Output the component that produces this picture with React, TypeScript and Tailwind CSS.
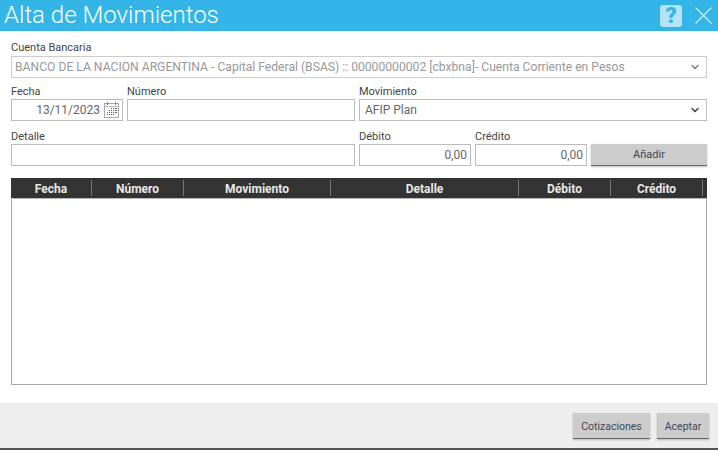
import React from "react";
import { ChevronDown } from "lucide-react";

const columns = [
    { label: "Fecha", width: "w-[81px]" },
    { label: "Número", width: "w-[92px]" },
    { label: "Movimiento", width: "w-[147px]" },
    { label: "Detalle", width: "w-[188px]" },
    { label: "Débito", width: "w-[92px]" },
    { label: "Crédito", width: "w-[92px]" },
];

const Label = ({ children }: { children: React.ReactNode }) => (
    <div className="h-[13px] text-[11px] leading-[13px] text-[#444]">{children}</div>
);

const Field = ({ value }: { value?: string }) => (
    <div className="mt-[1px] h-[22px] border border-[#bbb] bg-white px-[3px] text-right text-[12px] leading-[21px] text-[#666]">
        {value}
    </div>
);

const CalendarIcon = () => (
    <svg width="15" height="16" viewBox="0 0 15 16" className="shrink-0" fill="none">
        <rect x="0.5" y="1.5" width="14" height="14" stroke="#aaa" />
        <path d="M3.5 0v3M11.5 0v3" stroke="#777" />
        <path d="M1 4.5h13" stroke="#bbb" />
        <path d="M7 6.5h1M9 6.5h1M11 6.5h2M5 8.5h1M7 8.5h1M9 8.5h1M11 8.5h2M3 10.5h1M5 10.5h1M7 10.5h1M9 10.5h1M11 10.5h2M3 12.5h1M5 12.5h1M7 12.5h1M9 12.5h1" stroke="#666" />
    </svg>
);

const Button = ({ children, className }: { children: React.ReactNode; className: string }) => (
    <div className={`flex items-center justify-center border-b border-b-[#666] bg-[#ccc] pt-[2px] text-[#445] shadow-[0_1px_2px_rgba(0,0,0,0.25)] ${className}`}>
        {children}
    </div>
);

const App = () => {
    return (
        <div className="flex h-[450px] w-[718px] flex-col overflow-hidden bg-white font-['Roboto',sans-serif]">
            <div className="flex h-[31px] shrink-0 items-center justify-between bg-[#33b5e7] pl-[4px] pr-[6px]">
                <div className="text-[24px] font-light leading-[31px] text-white">Alta de Movimientos</div>
                <div className="flex items-center gap-[13px]">
                    <div className="flex h-[22px] w-[22px] items-center justify-center rounded-[3px] bg-[#b5e3f7] text-[22px] font-black leading-none text-[#33b5e7]">?</div>
                    <svg width="17" height="17" viewBox="0 0 17 17" fill="none">
                        <path d="M0.5 0.5L16.5 16.5M16.5 0.5L0.5 16.5" stroke="#c8ecfa" strokeWidth="1.3" />
                    </svg>
                </div>
            </div>

            <div className="flex flex-1 flex-col px-[11px] pt-[10px]">
                <Label>Cuenta Bancaria</Label>
                <div className="mt-[2px] flex h-[22px] items-center justify-between border border-[#ccc] bg-white pl-[3px] pr-[5px] text-[12.15px] text-[#999]">
                    <span className="whitespace-nowrap">BANCO DE LA NACION ARGENTINA - Capital Federal (BSAS) :: 00000000002 [cbxbna]- Cuenta Corriente en Pesos</span>
                    <ChevronDown size={12} strokeWidth={2.5} className="text-[#777]" />
                </div>

                <div className="mt-[7px] flex gap-[4px]">
                    <div className="w-[112px]">
                        <Label>Fecha</Label>
                        <div className="mt-[1px] flex h-[22px] items-center justify-end gap-[4px] border border-[#bbb] pr-[3px] text-[12px] text-[#666]">
                            <span>13/11/2023</span>
                            <CalendarIcon />
                        </div>
                    </div>
                    <div className="w-[228px]">
                        <Label>Número</Label>
                        <Field />
                    </div>
                    <div className="w-[348px]">
                        <Label>Movimiento</Label>
                        <div className="mt-[1px] flex h-[22px] items-center justify-between border border-[#bbb] pl-[5px] pr-[5px] text-[12px] text-[#666]">
                            <span>AFIP Plan</span>
                            <ChevronDown size={12} strokeWidth={3} className="text-[#444]" />
                        </div>
                    </div>
                </div>

                <div className="mt-[9px] flex gap-[4px]">
                    <div className="w-[344px]">
                        <Label>Detalle</Label>
                        <Field />
                    </div>
                    <div className="w-[112px]">
                        <Label>Débito</Label>
                        <Field value="0,00" />
                    </div>
                    <div className="w-[112px]">
                        <Label>Crédito</Label>
                        <Field value="0,00" />
                    </div>
                    <Button className="mt-[14px] h-[22px] w-[116px] text-[11px]">Añadir</Button>
                </div>

                <div className="mt-[12px] flex h-[207px] flex-col border border-t-0 border-[#aaa]">
                    <div className="-mx-px flex h-[21px] shrink-0 border-b border-b-[#bbb] bg-[#333]">
                        {columns.map((col) => (
                            <div
                                key={col.label}
                                className={`${col.width} my-[2px] flex items-center justify-center border-r border-r-[#777] pt-[1px] text-[12px] font-bold text-[#e8e8e8]`}
                            >
                                {col.label}
                            </div>
                        ))}
                    </div>
                </div>
            </div>

            <div className="flex h-[47px] shrink-0 justify-end gap-[7px] border-b-2 border-b-[#555] bg-[#eee] pr-[9px] pt-[10px]">
                <Button className="h-[26px] w-[77px] text-[10.5px]">Cotizaciones</Button>
                <Button className="h-[26px] w-[52px] text-[10.5px]">Aceptar</Button>
            </div>
        </div>
    );
};

export default App;
